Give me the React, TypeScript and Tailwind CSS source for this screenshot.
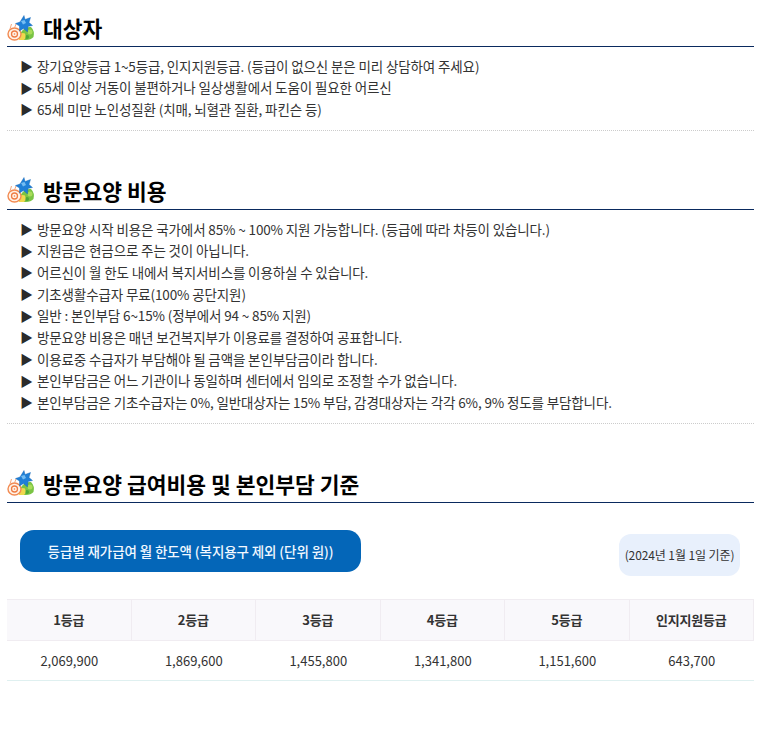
import React from 'react';

const targetItems = [
  '장기요양등급 1~5등급, 인지지원등급. (등급이 없으신 분은 미리 상담하여 주세요)',
  '65세 이상 거동이 불편하거나 일상생활에서 도움이 필요한 어르신',
  '65세 미만 노인성질환 (치매, 뇌혈관 질환, 파킨슨 등)',
];

const costItems = [
  '방문요양 시작 비용은 국가에서 85% ~ 100% 지원 가능합니다. (등급에 따라 차등이 있습니다.)',
  '지원금은 현금으로 주는 것이 아닙니다.',
  '어르신이 월 한도 내에서 복지서비스를 이용하실 수 있습니다.',
  '기초생활수급자 무료(100% 공단지원)',
  '일반 : 본인부담 6~15% (정부에서 94 ~ 85% 지원)',
  '방문요양 비용은 매년 보건복지부가 이용료를 결정하여 공표합니다.',
  '이용료중 수급자가 부담해야 될 금액을 본인부담금이라 합니다.',
  '본인부담금은 어느 기관이나 동일하며 센터에서 임의로 조정할 수가 없습니다.',
  '본인부담금은 기초수급자는 0%, 일반대상자는 15% 부담, 감경대상자는 각각 6%, 9% 정도를 부담합니다.',
];

const grades = [
  { label: '1등급', amount: '2,069,900' },
  { label: '2등급', amount: '1,869,600' },
  { label: '3등급', amount: '1,455,800' },
  { label: '4등급', amount: '1,341,800' },
  { label: '5등급', amount: '1,151,600' },
  { label: '인지지원등급', amount: '643,700' },
];

const HeadingIcon = () => (
  <svg width="28" height="26" viewBox="0 0 28 26" className="shrink-0">
    <path d="M13 19 q4 -8 11 -7 q4 4 2.500 10 q-3 3.500 -9 3 h-4 z" fill="#7ac444" />
    <circle cx="23" cy="17" r="2.500" fill="#a9dc5a" />
    <circle cx="20" cy="22" r="2" fill="#4fa838" />
    <path d="M11 20 q4 -3 7 -1.500 q1.500 4 -1 6.500 h-5 z" fill="#f0d84e" />
    <ellipse cx="7.500" cy="19" rx="6.500" ry="6" fill="#fff3e8" stroke="#f28a52" strokeWidth="1.400" />
    <circle cx="7.500" cy="19" r="3" fill="none" stroke="#ef7d45" strokeWidth="1.300" />
    <circle cx="7.500" cy="19" r="0.800" fill="#ef7d45" />
    <path d="M3 14 l1.500 -5 M7.500 13 l1.500 -4" stroke="#f3a67c" strokeWidth="1" fill="none" />
    <path d="M17 0.500 l1 4 l5.500 -2 l-1.500 5 l3.500 3 l-4.500 1 l-0.500 5.500 l-4 -3.500 l-4 2.500 l0 -5 l-4 -2.500 l4.500 -1.500 z" fill="#1f7fd6" stroke="#0f5fb0" strokeWidth="0.400" />
    <path d="M14 6 l3.500 -1 l1.500 3 l-3 1.500 z" fill="#74bdf3" />
  </svg>
);

const Heading = ({ title }: { title: string }) => (
  <div className="flex items-center h-[37px] border-b border-[#0a2a5e] box-content">
    <HeadingIcon />
    <h2 className="ml-[8px] text-[21.5px] font-bold text-black leading-none">{title}</h2>
  </div>
);

const Bullets = ({ items }: { items: string[] }) => (
  <ul className="pl-[13px] pt-[8px] pb-[10px] border-b border-dotted border-[#cccccc]">
    {items.map((item, i) => (
      <li key={i} className="flex h-[21.67px] items-center text-[13.5px] tracking-[-0.13px] text-[#333333] whitespace-nowrap">
        <span className="w-[17px] shrink-0 text-[13px] text-[#2b2b2b]">▶</span>
        {item}
      </li>
    ))}
  </ul>
);

export default function App() {
  return (
    <div className="w-[747px] ml-[7px] pt-[9px] pb-[48px] bg-white font-['Noto_Sans_CJK_KR','Noto_Sans',sans-serif]">
      <Heading title="대상자" />
      <Bullets items={targetItems} />

      <div className="mt-[41px]">
        <Heading title="방문요양 비용" />
        <Bullets items={costItems} />
      </div>

      <div className="mt-[41px]">
        <Heading title="방문요양 급여비용 및 본인부담 기준" />

        <div className="flex items-start justify-between pl-[13px] pr-[14px] mt-[27px]">
          <div className="flex h-[42px] w-[341px] items-center justify-center rounded-[14px] bg-[#0466b8] text-[13.5px] font-medium tracking-[-0.1px] text-[#f2f8ff]">
            등급별 재가급여 월 한도액 (복지용구 제외 (단위 원))
          </div>
          <div className="mt-[4px] flex h-[42px] w-[121px] items-center justify-center rounded-[12px] bg-[#e8f0fc] text-[12px] tracking-[-0.1px] text-[#333333]">
            (2024년 1월 1일 기준)
          </div>
        </div>

        <div className="mt-[23px] grid grid-cols-6 border-b border-[#dff0f0]">
          {grades.map((g) => (
            <div key={g.label} className="flex h-[42px] items-center justify-center border-y border-r border-[#f0ecf1] bg-[#f9f8fb] text-[13px] font-bold tracking-[-0.2px] text-[#333333]">
              {g.label}
            </div>
          ))}
          {grades.map((g) => (
            <div key={g.amount} className="flex h-[39px] items-center justify-center text-[13px] text-[#333333]">
              {g.amount}
            </div>
          ))}
        </div>
      </div>
    </div>
  );
}
